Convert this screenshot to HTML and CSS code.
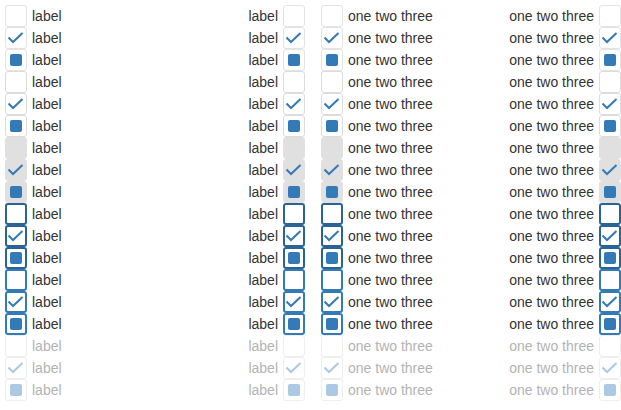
FILE: index.html
```html
<!DOCTYPE html>
<html>
<head>
<meta charset="utf-8">
<link rel="stylesheet" href="styles.css">
</head>
<body>
<div class="grid">
  <div class="col">
    <div class="row"><span class="cb"></span><span class="txt">label</span></div>
    <div class="row"><span class="cb"><svg class="chk" viewBox="0 0 22 22"><polyline points="3.5,10.5 8,15 17.5,6"/></svg></span><span class="txt">label</span></div>
    <div class="row"><span class="cb"><span class="ind"></span></span><span class="txt">label</span></div>
    <div class="row hover"><span class="cb"></span><span class="txt">label</span></div>
    <div class="row hover"><span class="cb"><svg class="chk" viewBox="0 0 22 22"><polyline points="3.5,10.5 8,15 17.5,6"/></svg></span><span class="txt">label</span></div>
    <div class="row hover"><span class="cb"><span class="ind"></span></span><span class="txt">label</span></div>
    <div class="row active"><span class="cb"></span><span class="txt">label</span></div>
    <div class="row active"><span class="cb"><svg class="chk" viewBox="0 0 22 22"><polyline points="3.5,10.5 8,15 17.5,6"/></svg></span><span class="txt">label</span></div>
    <div class="row active"><span class="cb"><span class="ind"></span></span><span class="txt">label</span></div>
    <div class="row focus"><span class="cb"></span><span class="txt">label</span></div>
    <div class="row focus"><span class="cb"><svg class="chk" viewBox="0 0 22 22"><polyline points="3.5,10.5 8,15 17.5,6"/></svg></span><span class="txt">label</span></div>
    <div class="row focus"><span class="cb"><span class="ind"></span></span><span class="txt">label</span></div>
    <div class="row focus2"><span class="cb"></span><span class="txt">label</span></div>
    <div class="row focus2"><span class="cb"><svg class="chk" viewBox="0 0 22 22"><polyline points="3.5,10.5 8,15 17.5,6"/></svg></span><span class="txt">label</span></div>
    <div class="row focus2"><span class="cb"><span class="ind"></span></span><span class="txt">label</span></div>
    <div class="row disabled"><span class="cb"></span><span class="txt">label</span></div>
    <div class="row disabled"><span class="cb"><svg class="chk" viewBox="0 0 22 22"><polyline points="3.5,10.5 8,15 17.5,6"/></svg></span><span class="txt">label</span></div>
    <div class="row disabled"><span class="cb"><span class="ind"></span></span><span class="txt">label</span></div>
  </div>
  <div class="col right">
    <div class="row"><span class="txt">label</span><span class="cb"></span></div>
    <div class="row"><span class="txt">label</span><span class="cb"><svg class="chk" viewBox="0 0 22 22"><polyline points="3.5,10.5 8,15 17.5,6"/></svg></span></div>
    <div class="row"><span class="txt">label</span><span class="cb"><span class="ind"></span></span></div>
    <div class="row hover"><span class="txt">label</span><span class="cb"></span></div>
    <div class="row hover"><span class="txt">label</span><span class="cb"><svg class="chk" viewBox="0 0 22 22"><polyline points="3.5,10.5 8,15 17.5,6"/></svg></span></div>
    <div class="row hover"><span class="txt">label</span><span class="cb"><span class="ind"></span></span></div>
    <div class="row active"><span class="txt">label</span><span class="cb"></span></div>
    <div class="row active"><span class="txt">label</span><span class="cb"><svg class="chk" viewBox="0 0 22 22"><polyline points="3.5,10.5 8,15 17.5,6"/></svg></span></div>
    <div class="row active"><span class="txt">label</span><span class="cb"><span class="ind"></span></span></div>
    <div class="row focus"><span class="txt">label</span><span class="cb"></span></div>
    <div class="row focus"><span class="txt">label</span><span class="cb"><svg class="chk" viewBox="0 0 22 22"><polyline points="3.5,10.5 8,15 17.5,6"/></svg></span></div>
    <div class="row focus"><span class="txt">label</span><span class="cb"><span class="ind"></span></span></div>
    <div class="row focus2"><span class="txt">label</span><span class="cb"></span></div>
    <div class="row focus2"><span class="txt">label</span><span class="cb"><svg class="chk" viewBox="0 0 22 22"><polyline points="3.5,10.5 8,15 17.5,6"/></svg></span></div>
    <div class="row focus2"><span class="txt">label</span><span class="cb"><span class="ind"></span></span></div>
    <div class="row disabled"><span class="txt">label</span><span class="cb"></span></div>
    <div class="row disabled"><span class="txt">label</span><span class="cb"><svg class="chk" viewBox="0 0 22 22"><polyline points="3.5,10.5 8,15 17.5,6"/></svg></span></div>
    <div class="row disabled"><span class="txt">label</span><span class="cb"><span class="ind"></span></span></div>
  </div>
  <div class="col gapped">
    <div class="row"><span class="cb"></span><span class="txt">one two three</span></div>
    <div class="row"><span class="cb"><svg class="chk" viewBox="0 0 22 22"><polyline points="3.5,10.5 8,15 17.5,6"/></svg></span><span class="txt">one two three</span></div>
    <div class="row"><span class="cb"><span class="ind"></span></span><span class="txt">one two three</span></div>
    <div class="row hover"><span class="cb"></span><span class="txt">one two three</span></div>
    <div class="row hover"><span class="cb"><svg class="chk" viewBox="0 0 22 22"><polyline points="3.5,10.5 8,15 17.5,6"/></svg></span><span class="txt">one two three</span></div>
    <div class="row hover"><span class="cb"><span class="ind"></span></span><span class="txt">one two three</span></div>
    <div class="row active"><span class="cb"></span><span class="txt">one two three</span></div>
    <div class="row active"><span class="cb"><svg class="chk" viewBox="0 0 22 22"><polyline points="3.5,10.5 8,15 17.5,6"/></svg></span><span class="txt">one two three</span></div>
    <div class="row active"><span class="cb"><span class="ind"></span></span><span class="txt">one two three</span></div>
    <div class="row focus"><span class="cb"></span><span class="txt">one two three</span></div>
    <div class="row focus"><span class="cb"><svg class="chk" viewBox="0 0 22 22"><polyline points="3.5,10.5 8,15 17.5,6"/></svg></span><span class="txt">one two three</span></div>
    <div class="row focus"><span class="cb"><span class="ind"></span></span><span class="txt">one two three</span></div>
    <div class="row focus2"><span class="cb"></span><span class="txt">one two three</span></div>
    <div class="row focus2"><span class="cb"><svg class="chk" viewBox="0 0 22 22"><polyline points="3.5,10.5 8,15 17.5,6"/></svg></span><span class="txt">one two three</span></div>
    <div class="row focus2"><span class="cb"><span class="ind"></span></span><span class="txt">one two three</span></div>
    <div class="row disabled"><span class="cb"></span><span class="txt">one two three</span></div>
    <div class="row disabled"><span class="cb"><svg class="chk" viewBox="0 0 22 22"><polyline points="3.5,10.5 8,15 17.5,6"/></svg></span><span class="txt">one two three</span></div>
    <div class="row disabled"><span class="cb"><span class="ind"></span></span><span class="txt">one two three</span></div>
  </div>
  <div class="col right">
    <div class="row"><span class="txt">one two three</span><span class="cb"></span></div>
    <div class="row"><span class="txt">one two three</span><span class="cb"><svg class="chk" viewBox="0 0 22 22"><polyline points="3.5,10.5 8,15 17.5,6"/></svg></span></div>
    <div class="row"><span class="txt">one two three</span><span class="cb"><span class="ind"></span></span></div>
    <div class="row hover"><span class="txt">one two three</span><span class="cb"></span></div>
    <div class="row hover"><span class="txt">one two three</span><span class="cb"><svg class="chk" viewBox="0 0 22 22"><polyline points="3.5,10.5 8,15 17.5,6"/></svg></span></div>
    <div class="row hover"><span class="txt">one two three</span><span class="cb"><span class="ind"></span></span></div>
    <div class="row active"><span class="txt">one two three</span><span class="cb"></span></div>
    <div class="row active"><span class="txt">one two three</span><span class="cb"><svg class="chk" viewBox="0 0 22 22"><polyline points="3.5,10.5 8,15 17.5,6"/></svg></span></div>
    <div class="row active"><span class="txt">one two three</span><span class="cb"><span class="ind"></span></span></div>
    <div class="row focus"><span class="txt">one two three</span><span class="cb"></span></div>
    <div class="row focus"><span class="txt">one two three</span><span class="cb"><svg class="chk" viewBox="0 0 22 22"><polyline points="3.5,10.5 8,15 17.5,6"/></svg></span></div>
    <div class="row focus"><span class="txt">one two three</span><span class="cb"><span class="ind"></span></span></div>
    <div class="row focus2"><span class="txt">one two three</span><span class="cb"></span></div>
    <div class="row focus2"><span class="txt">one two three</span><span class="cb"><svg class="chk" viewBox="0 0 22 22"><polyline points="3.5,10.5 8,15 17.5,6"/></svg></span></div>
    <div class="row focus2"><span class="txt">one two three</span><span class="cb"><span class="ind"></span></span></div>
    <div class="row disabled"><span class="txt">one two three</span><span class="cb"></span></div>
    <div class="row disabled"><span class="txt">one two three</span><span class="cb"><svg class="chk" viewBox="0 0 22 22"><polyline points="3.5,10.5 8,15 17.5,6"/></svg></span></div>
    <div class="row disabled"><span class="txt">one two three</span><span class="cb"><span class="ind"></span></span></div>
  </div>
</div>
</body>
</html>
```

FILE: styles.css
```css
html, body {
  margin: 0;
  padding: 0;
  background: #fff;
}
body {
  font-family: "Liberation Sans", Arial, sans-serif;
  font-size: 14px;
  color: #333;
}
.grid {
  display: grid;
  grid-template-columns: 150px 150px 166px 150px;
  padding: 5px 0 0 5px;
}
.col {
  display: flex;
  flex-direction: column;
}
.col.gapped {
  padding-left: 16px;
}
.row {
  display: flex;
  align-items: center;
  height: 22px;
  gap: 5px;
}
.col.right .row {
  justify-content: flex-end;
}
.txt {
  line-height: 22px;
  white-space: nowrap;
}
.cb {
  box-sizing: border-box;
  width: 22px;
  height: 22px;
  flex: none;
  border: 1px solid #e3e3e3;
  border-radius: 3px;
  background: #fff;
  display: flex;
  align-items: center;
  justify-content: center;
  position: relative;
}
.chk {
  position: absolute;
  left: -1px;
  top: -1px;
  width: 22px;
  height: 22px;
}
.chk polyline {
  fill: none;
  stroke: #337ab7;
  stroke-width: 2;
  stroke-linecap: butt;
  stroke-linejoin: miter;
}
.ind {
  width: 12px;
  height: 12px;
  border-radius: 2px;
  background: #337ab7;
}
.hover .cb {
  border-color: #dcdcdc;
}
.active .cb {
  background: #e0e0e0;
  border-color: #e0e0e0;
}
.focus .cb {
  border: 2px solid #2a6496;
}
.focus .chk {
  left: -2px;
  top: -2px;
}
.focus2 .cb {
  border: 2px solid #337ab7;
}
.focus2 .chk {
  left: -2px;
  top: -2px;
}
.disabled .txt {
  color: #b3b3b3;
}
.disabled .cb {
  border-color: #eeeeee;
}
.disabled .chk polyline {
  stroke: #abc9e3;
}
.disabled .ind {
  background: #abc9e3;
}
```
